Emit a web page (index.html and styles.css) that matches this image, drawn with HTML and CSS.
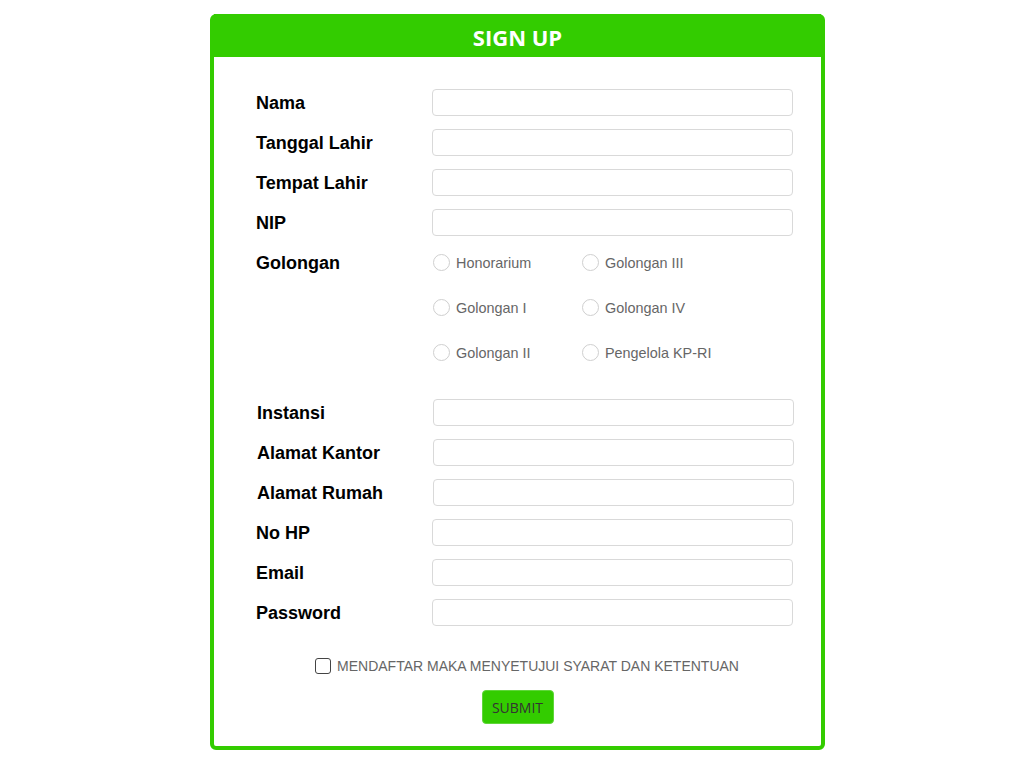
FILE: index.html
```html
<!DOCTYPE html>
<html lang="id">
<head>
    <meta charset="UTF-8">
    <meta name="viewport" content="width=device-width, initial-scale=1.0">
    <title>Sign Up</title>
    <link rel="stylesheet" href="styles.css">
</head>
<body>

<div class="card">
    <div class="card-header">SIGN UP</div>
    <form class="card-body">
        <div class="row"><label class="label">Nama</label><input type="text" class="field"></div>
        <div class="row"><label class="label">Tanggal Lahir</label><input type="text" class="field"></div>
        <div class="row"><label class="label">Tempat Lahir</label><input type="text" class="field"></div>
        <div class="row"><label class="label">NIP</label><input type="text" class="field"></div>

        <div class="row row-radio">
            <label class="label">Golongan</label>
            <div class="radio-grid">
                <label class="radio"><span class="dot"></span>Honorarium</label>
                <label class="radio"><span class="dot"></span>Golongan III</label>
                <label class="radio"><span class="dot"></span>Golongan I</label>
                <label class="radio"><span class="dot"></span>Golongan IV</label>
                <label class="radio"><span class="dot"></span>Golongan II</label>
                <label class="radio"><span class="dot"></span>Pengelola KP-RI</label>
            </div>
        </div>

        <div class="row shift"><label class="label">Instansi</label><input type="text" class="field"></div>
        <div class="row shift"><label class="label">Alamat Kantor</label><input type="text" class="field"></div>
        <div class="row shift"><label class="label">Alamat Rumah</label><input type="text" class="field"></div>
        <div class="row"><label class="label">No HP</label><input type="text" class="field"></div>
        <div class="row"><label class="label">Email</label><input type="text" class="field"></div>
        <div class="row"><label class="label">Password</label><input type="password" class="field"></div>

        <label class="agree"><span class="box"></span>MENDAFTAR MAKA MENYETUJUI SYARAT DAN KETENTUAN</label>
        <div class="actions"><button type="button" class="submit">SUBMIT</button></div>
    </form>
</div>

</body>
</html>
```

FILE: styles.css
```css
body {
    margin: 0;
    font-family: "Liberation Sans", Arial, sans-serif;
    background: #ffffff;
}
.card {
    width: 607px;
    margin: 14px 0 0 210px;
    border: 4px solid #33cc00;
    border-radius: 6px;
    background: #fff;
}
.card-header {
    height: 39px;
    margin-top: -4px;
    padding-top: 4px;
    background: #33cc00;
    color: #fff;
    text-align: center;
    font-family: "Open Sans", sans-serif;
    font-weight: 700;
    font-size: 22px;
    line-height: 39px;
}
.card-body {
    padding: 32px 27px 22px 42px;
}
.row {
    display: flex;
    align-items: center;
    height: 27px;
    margin-bottom: 13px;
}
.row.shift {
    padding-left: 1px;
}
.label {
    width: 176px;
    flex: none;
    padding-top: 1px;
    font-size: 18px;
    font-weight: 700;
    color: #000;
}
.field {
    width: 361px;
    height: 27px;
    box-sizing: border-box;
    border: 1px solid #d9d9d9;
    border-radius: 4px;
    background: #fff;
    outline: none;
}
.row-radio {
    align-items: flex-start;
    height: auto;
    margin-bottom: 33px;
}
.row-radio .label {
    line-height: 27px;
}
.radio-grid {
    display: grid;
    grid-template-columns: 149px 149px;
    row-gap: 18px;
    padding-left: 1px;
}
.radio {
    display: flex;
    align-items: center;
    height: 27px;
    font-size: 14.4px;
    color: #666;
}
.dot {
    width: 15px;
    height: 15px;
    border: 1px solid #cfcfcf;
    border-radius: 50%;
    margin-right: 6px;
}
.agree {
    display: flex;
    align-items: center;
    justify-content: center;
    margin-top: 32px;
    padding-left: 4px;
    font-size: 14px;
    color: #666;
}
.box {
    width: 14px;
    height: 14px;
    border: 1.5px solid #444;
    border-radius: 3px;
    margin-right: 6px;
}
.actions {
    text-align: center;
    margin-top: 16px;
    padding-right: 15px;
}
.submit {
    width: 72px;
    height: 34px;
    background: #33cc00;
    border: 1px solid #5fd63a;
    border-radius: 4px;
    color: #333;
    font-family: "Open Sans", sans-serif;
    font-size: 14px;
    padding: 0;
}
```
